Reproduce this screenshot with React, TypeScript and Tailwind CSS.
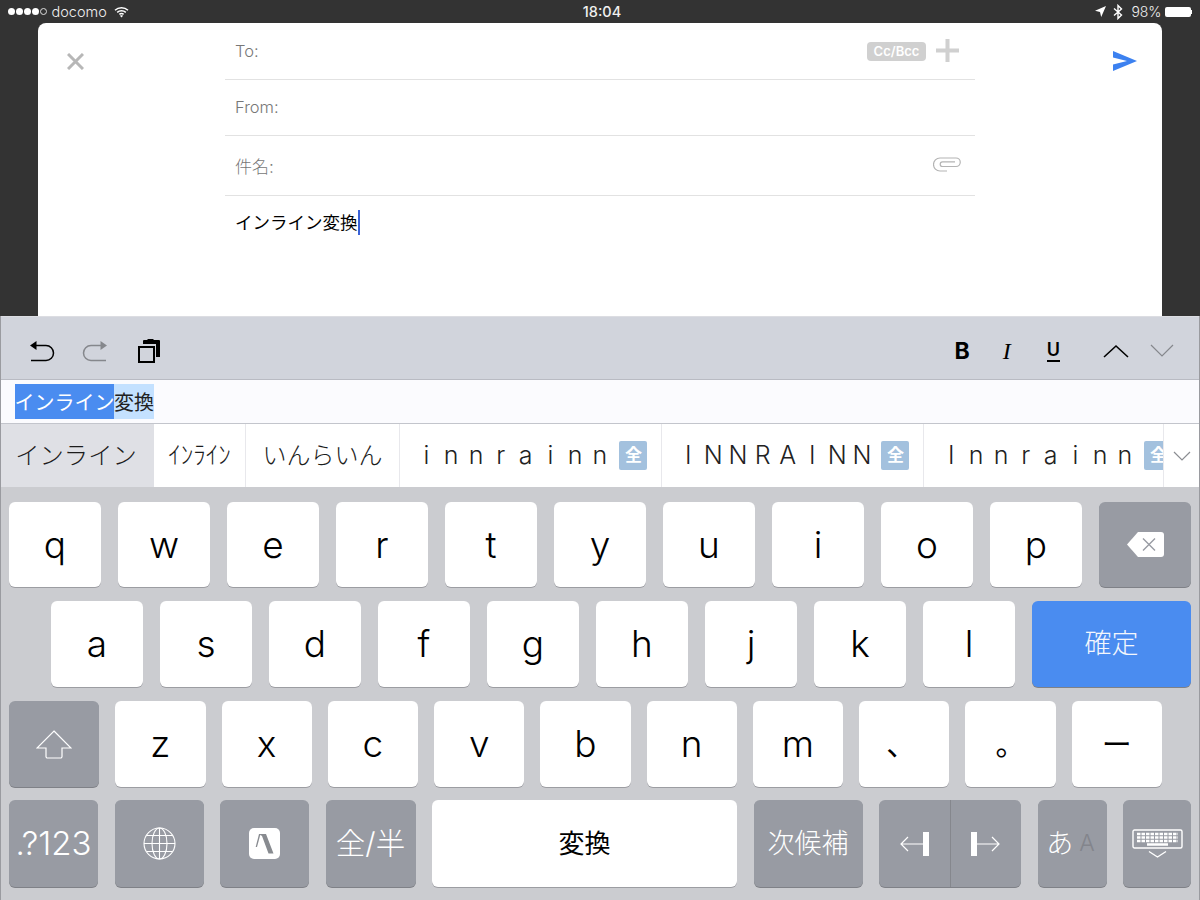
import React from "react";

const base = "font-['Inter','Noto_Sans_CJK_JP',sans-serif]";

type KeyProps = {
  children?: React.ReactNode;
  className?: string;
  dark?: boolean;
};

const Key = ({ children, className = "flex-1", dark }: KeyProps) => {
  return (
    <div
      className={`${className} flex items-center justify-center rounded-[6px] ${
        dark
          ? "bg-[#989ba3] text-white shadow-[0_1px_0_#7f8187]"
          : "bg-white text-black shadow-[0_1px_0_#9c9da2]"
      }`}
    >
      {children}
    </div>
  );
};

const Letter = ({ c }: { c: string }) => <span className="-mt-[1px] text-[37px] font-light leading-none">{c}</span>;

const Zen = ({ className = "" }: { className?: string }) => (
  <span className={`flex h-[29px] w-[28px] shrink-0 items-center justify-center rounded-[2px] bg-[#a3c1de] text-[17px] font-bold leading-none text-white ${className}`}>
    全
  </span>
);

// full width romaji, every letter sits in its own cell
const Wide = ({ text }: { text: string }) => (
  <span className="flex shrink-0 text-[25px] font-light leading-none text-[#222]">
    {text.split("").map((c, i) => (
      <span key={i} className="w-[24.800px] text-center">{c}</span>
    ))}
  </span>
);

const StatusBar = () => (
  <div className="flex h-[23px] shrink-0 items-center bg-[#333333] px-[8px] text-[14.500px] font-light text-[#f0f0f0]">
    <div className="flex flex-1 items-center">
      <div className="flex gap-[1.500px]">
        <i className="h-[6.500px] w-[6.500px] rounded-full bg-white" />
        <i className="h-[6.500px] w-[6.500px] rounded-full bg-white" />
        <i className="h-[6.500px] w-[6.500px] rounded-full bg-white" />
        <i className="h-[6.500px] w-[6.500px] rounded-full bg-white" />
        <i className="h-[6.500px] w-[6.500px] rounded-full border border-[#ddd]" />
      </div>
      <span className="ml-[5px]">docomo</span>
      <svg width="15" height="12" viewBox="0 0 15 12" className="ml-[7px]" fill="none" stroke="#fff" strokeWidth="1.500">
        <path d="M1 4.200C4.600.8 10.400.8 14 4.200" />
        <path d="M3.200 6.400c2.400-2.200 6.200-2.200 8.600 0" />
        <path d="M5.400 8.400c1.200-1 3-1 4.200 0" />
        <path d="M7.500 11.500 6 9.800c.9-.6 2.100-.6 3 0z" fill="#fff" stroke="none" />
      </svg>
    </div>
    <div className="w-[60px] translate-x-[2px] text-center text-[14.500px] font-medium">18:04</div>
    <div className="flex flex-1 items-center justify-end">
      <svg width="11" height="11" viewBox="0 0 11 11" fill="#fff">
        <path d="M11 0 6.200 11 5 6 0 4.800z" />
      </svg>
      <svg width="10" height="16" viewBox="0 0 10 16" className="ml-[7px]" fill="none" stroke="#fff" strokeWidth="1.400">
        <path d="M1 4.500 8.500 11 5 14.500v-13L8.500 5 1 11.500" />
      </svg>
      <span className="ml-[8px] text-[14px]">98%</span>
      <div className="ml-[3px] flex items-center">
        <div className="h-[10px] w-[26px] rounded-[2px] bg-white" />
        <div className="h-[4px] w-[1.500px] bg-white" />
      </div>
    </div>
  </div>
);

const MailForm = () => (
  <div className="mx-[38px] flex h-[293px] shrink-0 rounded-t-[8px] bg-white">
    <div className="w-[187px] pl-[29px] pt-[30px]">
      <svg width="17" height="17" viewBox="0 0 17 17" stroke="#b7b7b7" strokeWidth="3">
        <path d="M1 1 16 16M16 1 1 16" />
      </svg>
    </div>
    <div className="w-[750px] text-[16.500px] font-light text-[#777]">
      <div className="flex h-[57px] items-center justify-between border-b border-[#e2e2e2] pl-[10px] pr-[16px]">
        <span>To:</span>
        <div className="flex items-center gap-[10px]">
          <span className="flex h-[19px] w-[59px] items-center justify-center rounded-[4px] bg-[#d0d0d0] text-[13px] font-semibold leading-none text-white">
            Cc/Bcc
          </span>
          <svg width="23" height="23" viewBox="0 0 23 23" className="-mt-[1px]" fill="#d0d0d0">
            <path d="M9.500 0h4v9.500H23v4h-9.500V23h-4v-9.500H0v-4h9.500z" />
          </svg>
        </div>
      </div>
      <div className="flex h-[56px] items-center border-b border-[#e2e2e2] pl-[10px]">From:</div>
      <div className="flex h-[60px] items-center justify-between border-b border-[#e2e2e2] pl-[10px] pr-[14px]">
        <span className="pt-[4px] text-[17px]">件名:</span>
        <svg width="28" height="15" viewBox="0 0 28 15" className="-mt-[3px]" fill="none" stroke="#b4b4b4" strokeWidth="1.200">
          <path d="M14 14H7A6.300 6.300 0 0 1 7 1h16a4 4 0 0 1 0 8.500H9.500a2.300 2.300 0 0 1 0-4.600H22" />
        </svg>
      </div>
      <div className="flex items-center pl-[10px] pt-[13px] text-[17.500px] font-normal leading-[26px] text-black">
        <span className="pt-[1px]">インライン変換</span>
        <i className="h-[25px] w-[2px] bg-[#3a62d8]" />
      </div>
    </div>
    <div className="flex flex-1 justify-end pr-[25px] pt-[28px]">
      <svg width="24" height="20" viewBox="0 0 24 20" fill="#3c81f0">
        <path d="M0 0 24 10 0 20 0 13.500 14 10 0 6.500z" />
      </svg>
    </div>
  </div>
);

const Toolbar = () => (
  <div className="flex h-[64px] shrink-0 items-center justify-between border-b border-t border-[#dcdde2] border-b-[#b9bbc3] bg-[#d1d4dc] pl-[28px] pr-[25px] pt-[6px]">
    <div className="flex items-center">
      <svg width="26" height="24" viewBox="0 0 26 24" fill="none" stroke="#000" strokeWidth="1.500">
        <path d="M7 6.500h10a7.500 7.500 0 0 1 0 15H2" />
        <path d="M1 6.500 7.500 2v9z" fill="#000" stroke="none" />
      </svg>
      <svg width="26" height="24" viewBox="0 0 26 24" className="ml-[27px]" fill="none" stroke="#85878c" strokeWidth="1.500">
        <path d="M19 6.500H9a7.500 7.500 0 0 0 0 15h15" />
        <path d="M25 6.500 18.500 2v9z" fill="#85878c" stroke="none" />
      </svg>
      <svg width="23" height="24" viewBox="0 0 23 24" className="ml-[30px]">
        <path d="M6 1h3l1-1h5l1 1h5a1 1 0 0 1 1 1v16h-4V5H5V2a1 1 0 0 1 1-1z" fill="#000" />
        <rect x="1" y="8" width="15" height="15" fill="none" stroke="#000" strokeWidth="2" />
      </svg>
    </div>
    <div className="flex items-center text-black">
      <span className="text-[23px] font-bold leading-none">B</span>
      <span className="ml-[33px] font-['Liberation_Serif',serif] text-[24px] italic leading-none">I</span>
      <span className="ml-[36px] flex flex-col items-center">
        <span className="text-[18px] font-semibold leading-none">U</span>
        <i className="mt-[1px] h-[2px] w-[13px] bg-black" />
      </span>
      <svg width="26" height="14" viewBox="0 0 26 14" className="ml-[43px]" fill="none" stroke="#000" strokeWidth="1.600">
        <path d="M1 13 13 2l12 11" />
      </svg>
      <svg width="24" height="14" viewBox="0 0 24 14" className="ml-[21px]" fill="none" stroke="#85878c" strokeWidth="1.200">
        <path d="M1 1l11 11L23 1" />
      </svg>
    </div>
  </div>
);

const Composition = () => (
  <div className="flex h-[44px] shrink-0 items-center border-b border-[#c3c5cc] bg-[#fbfbfe] pl-[14px] text-[20px] leading-none">
    <span className="flex h-[35px] w-[99px] items-center justify-center overflow-hidden whitespace-nowrap bg-[#4a8cf0] pt-[3px] text-white">
      インライン
    </span>
    <span className="flex h-[35px] w-[40px] items-center justify-center bg-[#c4e1ff] pt-[3px] text-[#222]">変換</span>
  </div>
);

const Candidates = () => (
  <div className="flex h-[63px] shrink-0 items-center bg-white font-light text-[#1c1c1c]">
    <div className="flex h-full w-[153px] items-center justify-center bg-[#dfe0e5] pr-[3px] text-[24.300px] leading-none">
      インライン
    </div>
    <div className="flex h-full w-[92px] items-center justify-center border-r border-[#e8e8ec] text-[25px] leading-none">
      ｲﾝﾗｲﾝ
    </div>
    <div className="flex h-full w-[154px] items-center justify-center border-r border-[#e8e8ec] text-[24px] leading-none">
      いんらいん
    </div>
    <div className="flex h-full w-[262px] shrink-0 items-center border-r border-[#e8e8ec] pl-[14px]">
      <Wide text="innrainn" />
      <Zen className="ml-[7px]" />
    </div>
    <div className="flex h-full w-[262px] shrink-0 items-center border-r border-[#e8e8ec] pl-[14px]">
      <Wide text="INNRAINN" />
      <Zen className="ml-[7px]" />
    </div>
    <div className="flex h-full w-[240px] shrink-0 items-center overflow-hidden border-r border-[#e8e8ec] pl-[15px]">
      <Wide text="Innrainn" />
      <Zen className="ml-[7px]" />
    </div>
    <div className="flex flex-1 items-center justify-center">
      <svg width="18" height="10" viewBox="0 0 18 10" fill="none" stroke="#8b8d92" strokeWidth="1.200">
        <path d="M1 1l8 8 8-8" />
      </svg>
    </div>
  </div>
);

const BackspaceIcon = () => (
  <svg width="37" height="25" viewBox="0 0 37 25">
    <path d="M11 0h23a3 3 0 0 1 3 3v19a3 3 0 0 1-3 3H11L0 12.500z" fill="#fff" />
    <path d="M16 6.500 28 18.500M28 6.500 16 18.500" stroke="#989ba3" strokeWidth="1.400" />
  </svg>
);

const ShiftIcon = () => (
  <svg width="36" height="29" viewBox="0 0 36 29" fill="none" stroke="#fff" strokeWidth="1.200">
    <path d="M18 1 35 18H26v8.500a1.500 1.500 0 0 1-1.500 1.500h-13a1.500 1.500 0 0 1-1.500-1.500V18H1z" />
  </svg>
);

const GlobeIcon = () => (
  <svg width="33" height="33" viewBox="0 0 33 33" fill="none" stroke="#fff" strokeWidth="1.100">
    <circle cx="16.500" cy="16.500" r="15.500" />
    <ellipse cx="16.500" cy="16.500" rx="7.500" ry="15.500" />
    <path d="M16.500 1v31M1 16.500h31M3.500 8.500h26M3.500 24.500h26" />
  </svg>
);

const AppIcon = () => (
  <div className="flex h-[31px] w-[31px] items-center justify-center rounded-[5px] bg-white">
    <svg width="31" height="31" viewBox="0 0 31 31" fill="#888b90">
      <path d="M10 6h7l7.500 19.500h-5L13 8z" />
      <path d="M10 6h1.500L8 19H6.700z" />
    </svg>
  </div>
);

const HideKeyboardIcon = () => (
  <svg width="51" height="29" viewBox="0 0 51 29" fill="none" stroke="#fff">
    <rect x="1" y="1" width="49" height="18" rx="1.500" strokeWidth="1.400" />
    <path d="M5 5h41M5 8.500h41M5 12h41" strokeWidth="2.500" strokeDasharray="3.500 1" />
    <path d="M15 15.500h21" strokeWidth="2.500" />
    <path d="M17 22.500l8.500 5.500 8.500-5.500" strokeWidth="1.400" />
  </svg>
);

const Keyboard = () => (
  <div className="flex flex-1 flex-col bg-[#cbccd0] pl-[8px] pr-[8px] pt-[15px]">
    <div className="flex h-[85px] gap-[17px]">
      {["q", "w", "e", "r", "t", "y", "u", "i", "o", "p"].map((c) => (
        <Key key={c}><Letter c={c} /></Key>
      ))}
      <Key dark><BackspaceIcon /></Key>
    </div>
    <div className="mt-[14px] flex h-[86px] gap-[17px] pl-[42px]">
      {["a", "s", "d", "f", "g", "h", "j", "k", "l"].map((c) => (
        <Key key={c} className="w-[92px]"><Letter c={c} /></Key>
      ))}
      <div className="flex flex-1 items-center justify-center rounded-[6px] bg-[#4a8cf0] text-[27px] font-light text-[#f4f7fd] shadow-[0_1px_0_#7f8187]">
        確定
      </div>
    </div>
    <div className="mt-[14px] flex h-[86px] gap-[16px] pr-[29px]">
      <Key dark><ShiftIcon /></Key>
      {["z", "x", "c", "v", "b", "n", "m"].map((c) => (
        <Key key={c}><Letter c={c} /></Key>
      ))}
      <Key><span className="-translate-x-[3px] text-[30px] leading-none">、</span></Key>
      <Key><span className="text-[30px] leading-none">。</span></Key>
      <Key><span className="text-[30px] leading-none">ー</span></Key>
    </div>
    <div className="mt-[13px] flex h-[87px] gap-[16.500px] text-[29.500px] font-light leading-none">
      <Key dark className="w-[89px]"><span className="text-[33px]">.?123</span></Key>
      <Key dark className="w-[89px]"><GlobeIcon /></Key>
      <Key dark className="w-[89px]"><AppIcon /></Key>
      <Key dark className="w-[90px]">全/半</Key>
      <Key className="flex-1"><span className="text-[26px] font-normal">変換</span></Key>
      <Key dark className="w-[109px]"><span className="text-[27px]">次候補</span></Key>
      <div className="flex w-[142px] rounded-[6px] bg-[#989ba3] shadow-[0_1px_0_#7f8187]">
        <div className="flex flex-1 items-center justify-center border-r border-[#85878d]">
          <svg width="30" height="26" viewBox="0 0 30 26" fill="none" stroke="#fff" strokeWidth="1.200">
            <path d="M25 13H2M9 6l-7 7 7 7" />
            <rect x="24" y="1" width="6" height="24" fill="#fff" stroke="none" />
          </svg>
        </div>
        <div className="flex flex-1 items-center justify-center">
          <svg width="30" height="26" viewBox="0 0 30 26" fill="none" stroke="#fff" strokeWidth="1.200">
            <path d="M5 13h23M21 6l7 7-7 7" />
            <rect x="0" y="1" width="6" height="24" fill="#fff" stroke="none" />
          </svg>
        </div>
      </div>
      <Key dark className="w-[69px]">
        <span className="-ml-[3px] text-[27px]">あ</span>
        <span className="ml-[6px] text-[23px] text-[#83858c]">A</span>
      </Key>
      <Key dark className="w-[68px]"><HideKeyboardIcon /></Key>
    </div>
  </div>
);

export default function App() {
  return (
    <div className={`flex h-[900px] w-[1200px] flex-col overflow-hidden bg-[#333333] ${base}`}>
      <StatusBar />
      <MailForm />
      <div className="flex flex-1 flex-col border-x border-[#9a9ba0]">
        <Toolbar />
        <Composition />
        <Candidates />
        <Keyboard />
      </div>
    </div>
  );
}
